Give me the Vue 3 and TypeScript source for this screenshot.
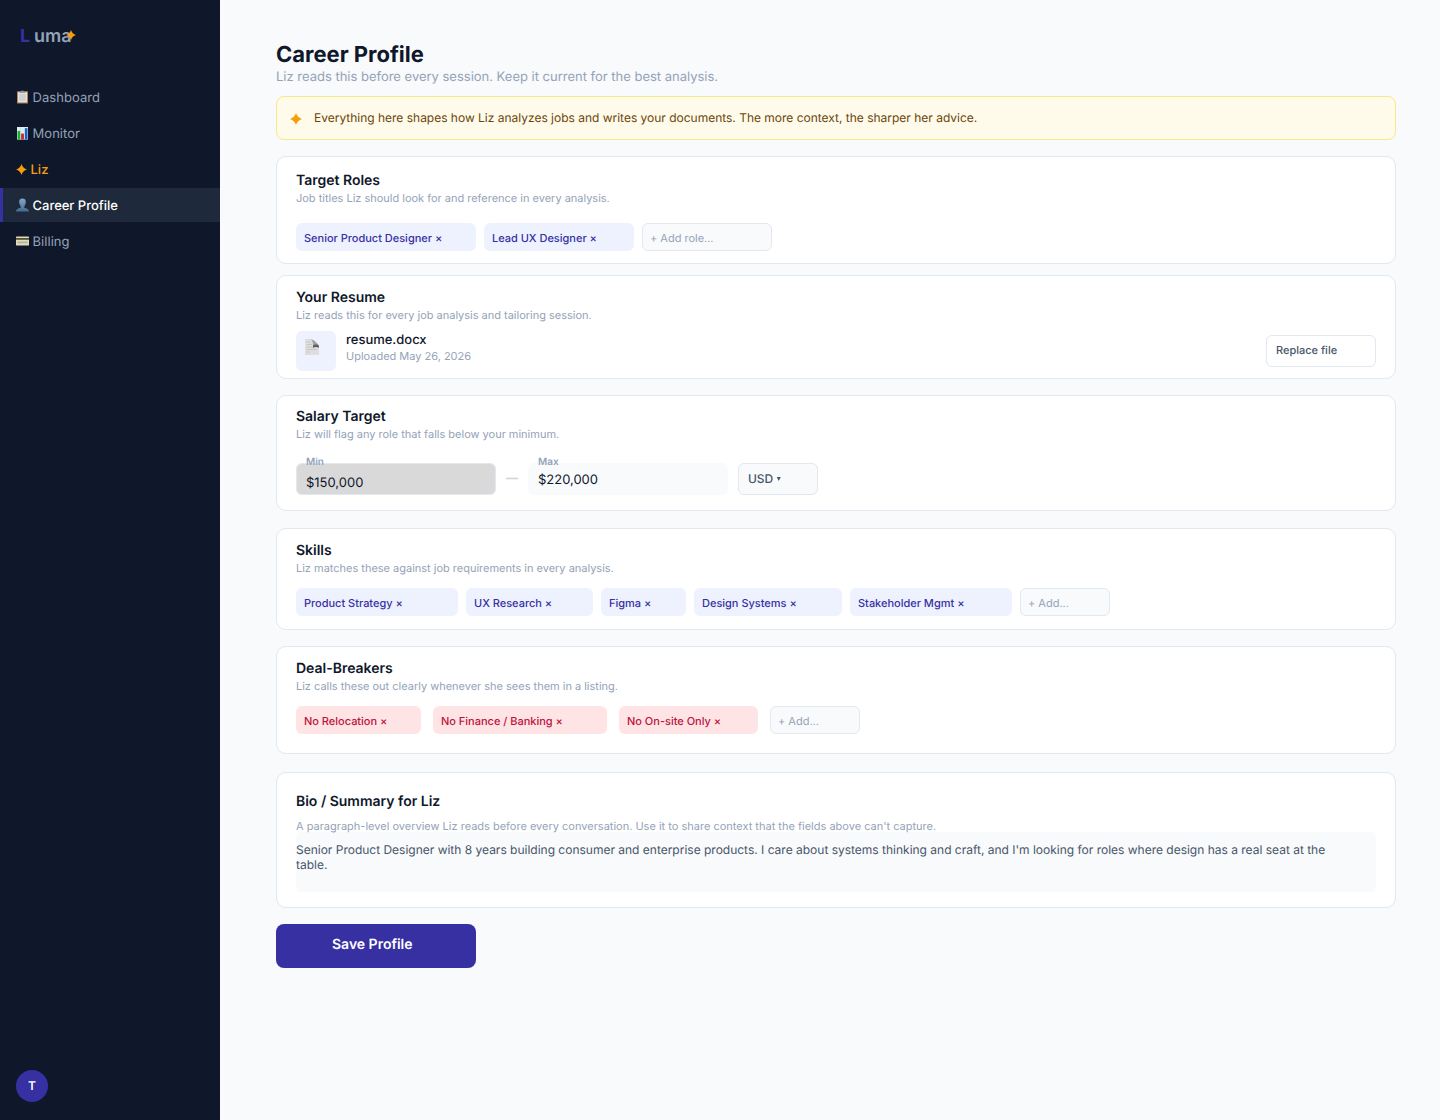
<script setup lang="ts">
interface Chip { label: string; width: number }

const star = 'M5 0Q6.2 3.8 10 5Q6.2 6.2 5 10Q3.8 6.2 0 5Q3.8 3.8 5 0Z'

const roles: Chip[] = [
  { label: 'Senior Product Designer ×', width: 180 },
  { label: 'Lead UX Designer ×', width: 150 },
]
const skills: Chip[] = [
  { label: 'Product Strategy ×', width: 162 },
  { label: 'UX Research ×', width: 127 },
  { label: 'Figma ×', width: 85 },
  { label: 'Design Systems ×', width: 148 },
  { label: 'Stakeholder Mgmt ×', width: 162 },
]
const dealBreakers: Chip[] = [
  { label: 'No Relocation ×', width: 125 },
  { label: 'No Finance / Banking ×', width: 174 },
  { label: 'No On-site Only ×', width: 139 },
]
</script>

<template>
  <div class="app">
    <aside class="sidebar">
      <div class="logo">
        <span class="logo-l">L</span><span class="logo-rest">uma</span>
        <svg class="logo-star" viewBox="0 0 10 10"><path :d="star" /></svg>
      </div>
      <nav>
        <a class="item">
          <svg class="ico" viewBox="0 0 13 14">
            <rect x="1" y="1.3" width="11" height="12.2" rx=".6" fill="#b08455" />
            <rect x="2" y="2.2" width="9" height="10.2" fill="#e3e3e3" />
            <rect x="3.2" y="3.8" width="6.6" height="7" fill="#cfcfd0" />
            <path d="M3.5 2.8V1.5H5.2L5.8.5H7.2L7.8 1.5H9.5V2.8Z" fill="#8d9196" />
          </svg>
          <span>Dashboard</span>
        </a>
        <a class="item">
          <svg class="ico" viewBox="0 0 13 14">
            <rect x="1" y="1" width="11" height="12.6" fill="#dfecf5" />
            <path d="M1 4.5H12M1 8H12M4.5 1V13M8.5 1V13" stroke="#c5dcea" stroke-width=".5" />
            <rect x="1.6" y="5" width="2.6" height="8.4" fill="#13b32b" />
            <rect x="5.1" y="7.6" width="2.8" height="5.8" fill="#d5202b" />
            <rect x="8.9" y="2.2" width="2.6" height="11.2" fill="#1663bd" />
          </svg>
          <span>Monitor</span>
        </a>
        <a class="item liz">
          <svg class="liz-star" viewBox="0 0 10 10"><path :d="star" /></svg>
          <span>Liz</span>
        </a>
        <a class="item active">
          <svg class="ico" viewBox="0 0 13 14">
            <defs>
              <linearGradient id="bust" x1="0" y1="0" x2="0" y2="1">
                <stop offset="0" stop-color="#7fa9c8" /><stop offset="1" stop-color="#456b8b" />
              </linearGradient>
            </defs>
            <path d="M6.5.6C8.9.6 10 2.2 9.8 4.6C9.6 6.5 8.9 7.6 8.2 8.4V9.6C8.6 10.4 12.8 10.2 13 13.4H0C.2 10.2 4.4 10.4 4.8 9.6V8.4C4.1 7.6 3.4 6.5 3.2 4.6C3 2.2 4.1.6 6.5.6Z" fill="url(#bust)" />
          </svg>
          <span>Career Profile</span>
        </a>
        <a class="item">
          <svg class="ico" viewBox="0 0 13 14">
            <rect x="0" y="2.6" width="13" height="9" rx=".7" fill="#e3dcb0" />
            <rect x="0" y="4" width="13" height="1.8" fill="#54503c" />
            <rect x="1" y="7" width="11" height="2.6" fill="#c9c8b8" />
            <path d="M2 8.5H11" stroke="#99a0a0" stroke-width=".8" stroke-dasharray="1.2 .5" />
          </svg>
          <span>Billing</span>
        </a>
      </nav>
      <div class="avatar">T</div>
    </aside>

    <main>
      <h1>Career Profile</h1>
      <p class="lead">Liz reads this before every session. Keep it current for the best analysis.</p>

      <div class="banner">
        <svg class="banner-star" viewBox="0 0 10 10"><path :d="star" /></svg>
        <span>Everything here shapes how Liz analyzes jobs and writes your documents. The more context, the sharper her advice.</span>
      </div>

      <section class="card roles">
        <h2>Target Roles</h2>
        <p class="sub">Job titles Liz should look for and reference in every analysis.</p>
        <div class="chips">
          <span v-for="c in roles" :key="c.label" class="chip" :style="{ width: c.width + 'px' }">{{ c.label }}</span>
          <span class="chip add wide">+ Add role...</span>
        </div>
      </section>

      <section class="card resume">
        <h2>Your Resume</h2>
        <p class="sub">Liz reads this for every job analysis and tailoring session.</p>
        <div class="file-row">
          <div class="file-icon">
            <svg viewBox="0 0 14 16">
              <path d="M0 0H6L14 7V16H0Z" fill="#dedede" />
              <path d="M1.5 3H6M1.5 5.5H7M1.5 8H7M1.5 10.5H12M1.5 13H4.5" stroke="#c2c2c2" stroke-width=".8" />
              <path d="M6 0C9 .8 12.6 4 14 7V8.6C11.6 7.8 9.6 7.9 7.8 8.8C8.4 6 8 2.6 6 0Z" fill="#a3a3a3" />
              <path d="M8.2 6.2C10 5.2 12.4 5.4 14 7V8.6C11.6 7.8 9.6 7.9 7.8 8.8Z" fill="#5f5f5f" />
            </svg>
          </div>
          <div class="file-meta">
            <span class="file-name">resume.docx</span>
            <span class="file-date">Uploaded May 26, 2026</span>
          </div>
          <button class="replace">Replace file</button>
        </div>
      </section>

      <section class="card salary">
        <h2>Salary Target</h2>
        <p class="sub">Liz will flag any role that falls below your minimum.</p>
        <div class="salary-row">
          <div class="field min"><label>Min</label><span>$150,000</span></div>
          <span class="dash">—</span>
          <div class="field max"><label>Max</label><span>$220,000</span></div>
          <div class="currency"><span>USD</span><i></i></div>
        </div>
      </section>

      <section class="card skills">
        <h2>Skills</h2>
        <p class="sub">Liz matches these against job requirements in every analysis.</p>
        <div class="chips">
          <span v-for="c in skills" :key="c.label" class="chip" :style="{ width: c.width + 'px' }">{{ c.label }}</span>
          <span class="chip add">+ Add...</span>
        </div>
      </section>

      <section class="card breakers">
        <h2>Deal-Breakers</h2>
        <p class="sub">Liz calls these out clearly whenever she sees them in a listing.</p>
        <div class="chips loose">
          <span v-for="c in dealBreakers" :key="c.label" class="chip red" :style="{ width: c.width + 'px' }">{{ c.label }}</span>
          <span class="chip add">+ Add...</span>
        </div>
      </section>

      <section class="card bio">
        <h2>Bio / Summary for Liz</h2>
        <p class="sub">A paragraph-level overview Liz reads before every conversation. Use it to share context that the fields above can't capture.</p>
        <div class="bio-text">Senior Product Designer with 8 years building consumer and enterprise products. I care about systems thinking and craft, and I'm looking for roles where design has a real seat at the table.</div>
      </section>

      <button class="save">Save Profile</button>
    </main>
  </div>
</template>

<style>
body { background: #f8fafc; }
</style>

<style scoped>
* { box-sizing: border-box; }
.app {
  display: flex;
  width: 1440px;
  height: 1120px;
  overflow: hidden;
  font-family: Inter, "Liberation Sans", sans-serif;
  text-rendering: geometricPrecision;
  background: #f8fafc;
  color: #0f172a;
}
h1, h2, p { margin: 0; }
button { font-family: inherit; text-align: left; text-rendering: inherit; letter-spacing: inherit; }

.sidebar {
  width: 220px;
  flex: none;
  display: flex;
  flex-direction: column;
  background: #0f172a;
}
.logo {
  display: flex;
  height: 80px;
  padding: 26px 0 0 20px;
  font-size: 18px;
  line-height: 22px;
  font-weight: 700;
}
.logo-l { width: 14px; color: #3730a3; }
.logo-rest { color: #94a3b8; font-weight: 600; }
.logo-star { width: 10px; height: 10px; margin: 4px 0 0 -5.5px; fill: #f59e0b; }
nav { display: flex; flex-direction: column; gap: 2px; }
.item {
  display: flex;
  align-items: center;
  height: 34px;
  padding-left: 16px;
  font-size: 13px;
  line-height: 16px;
  letter-spacing: .05px;
  color: #94a3b8;
}
.item span { padding-top: 2px; }
.ico { width: 13px; height: 14px; margin: -1px 3.5px 0 0; flex: none; }
.liz { color: #f59e0b; font-weight: 500; letter-spacing: 0; }
.liz-star { width: 11px; height: 11px; margin: 1px 3.5px 0 0; fill: #f59e0b; }
.active {
  padding-left: 13px;
  border-left: 3px solid #3730a3;
  background: #1e293b;
  color: #fff;
  font-weight: 500;
  letter-spacing: -.02px;
}
.avatar {
  display: flex;
  align-items: center;
  justify-content: center;
  width: 32px;
  height: 32px;
  margin: auto 0 18px 16px;
  padding-bottom: 1px;
  border-radius: 50%;
  background: #3730a3;
  color: #fff;
  font-size: 12px;
  font-weight: 600;
}

main { width: 1220px; padding: 41px 44px 0 56px; letter-spacing: -.01px; }
h1 { font-size: 22px; line-height: 28px; font-weight: 700; }
.lead { font-size: 13px; line-height: 16px; color: #94a3b8; }
.banner {
  display: flex;
  align-items: flex-start;
  height: 44px;
  margin-top: 11px;
  padding: 13px 0 0 13px;
  border: 1px solid #fde68a;
  border-radius: 8px;
  background: #fffbeb;
  font-size: 12px;
  line-height: 16px;
  color: #6b450a;
}
.banner-star { width: 12px; height: 12px; margin: 3px 12px 0 0; fill: #f59e0b; }

.card {
  padding: 0 19px;
  border: 1px solid #e2e8f0;
  border-radius: 10px;
  background: #fff;
}
h2 { font-size: 14px; line-height: 17px; font-weight: 600; }
.sub { font-size: 11px; line-height: 13px; margin-top: 3px; color: #94a3b8; }
.roles { height: 108px; margin-top: 16px; padding-top: 15px; }
.resume { height: 104px; margin-top: 11px; padding-top: 13px; }
.salary { height: 116px; margin-top: 16px; padding-top: 12px; }
.skills { height: 102px; margin-top: 17px; padding-top: 13px; }
.breakers { height: 108px; margin-top: 16px; padding-top: 13px; }
.bio { height: 136px; margin-top: 18px; padding-top: 20px; }

.chips { display: flex; gap: 8px; margin-top: 13px; }
.roles .chips { margin-top: 18px; }
.loose { gap: 12px; }
.chip {
  flex: none;
  height: 28px;
  padding: 8px 0 0 8px;
  border-radius: 6px;
  background: #eef2ff;
  color: #3730a3;
  font-size: 11px;
  line-height: 14px;
  font-weight: 500;
}
.red { background: #ffe4e6; color: #be123c; }
.add {
  width: 90px;
  padding: 7px 0 0 7px;
  border: 1px solid #e2e8f0;
  background: #f8fafc;
  color: #94a3b8;
  font-weight: 400;
}
.wide { width: 130px; }

.file-row { display: flex; margin-top: 9px; }
.file-icon { width: 40px; height: 40px; padding: 8px 0 0 9px; border-radius: 6px; background: #eef2ff; }
.file-icon svg { display: block; width: 14px; height: 16px; }
.file-meta { display: flex; flex-direction: column; margin-left: 10px; }
.file-name { margin-top: 1px; font-size: 13px; line-height: 16px; font-weight: 500; }
.file-date { margin-top: 1px; font-size: 11px; line-height: 14px; color: #94a3b8; }
.replace {
  width: 110px;
  height: 32px;
  margin: 4px 0 0 auto;
  padding: 0 0 2px 9px;
  border: 1px solid #e2e8f0;
  border-radius: 6px;
  background: #fff;
  color: #475569;
  font-size: 11px;
  font-weight: 500;
}

.salary-row { display: flex; margin-top: 22px; }
.field { position: relative; width: 200px; height: 32px; border-radius: 6px; font-size: 13px; line-height: 16px; }
.field label { position: absolute; top: -7px; left: 10px; font-size: 10px; line-height: 12px; font-weight: 600; color: #94a3b8; }
.min { padding: 11px 0 0 9px; border: 1px solid #e2e8f0; background: #d9d9d9; }
.min label { top: -8px; left: 9px; }
.max { padding: 9px 0 0 10px; background: #f8fafc; }
.dash { width: 32px; padding-left: 10px; font-size: 12px; line-height: 29px; font-weight: 800; color: #cbd5e1; }
.currency {
  display: flex;
  width: 80px;
  height: 32px;
  margin-left: 10px;
  padding: 7px 0 0 9px;
  border: 1px solid #e2e8f0;
  border-radius: 6px;
  background: #f8fafc;
  color: #475569;
  font-size: 12px;
  line-height: 16px;
  font-weight: 500;
}
.currency i {
  width: 4px;
  height: 4px;
  margin: 6px 0 0 3.5px;
  background: #475569;
  clip-path: polygon(0 0, 100% 0, 50% 100%);
}

.bio .sub { margin-top: 10px; letter-spacing: 0; }
.bio-text {
  height: 60px;
  margin-top: -1px;
  padding: 10px 30px 0 0;
  border-radius: 6px;
  background: #f8fafc;
  color: #475569;
  font-size: 12px;
  line-height: 15px;
  letter-spacing: -.006px;
}
.save {
  display: block;
  width: 200px;
  height: 44px;
  margin-top: 16px;
  padding: 0 0 3px 56px;
  border: 0;
  border-radius: 8px;
  background: #3730a3;
  color: #fff;
  font-size: 14px;
  font-weight: 600;
}
</style>
